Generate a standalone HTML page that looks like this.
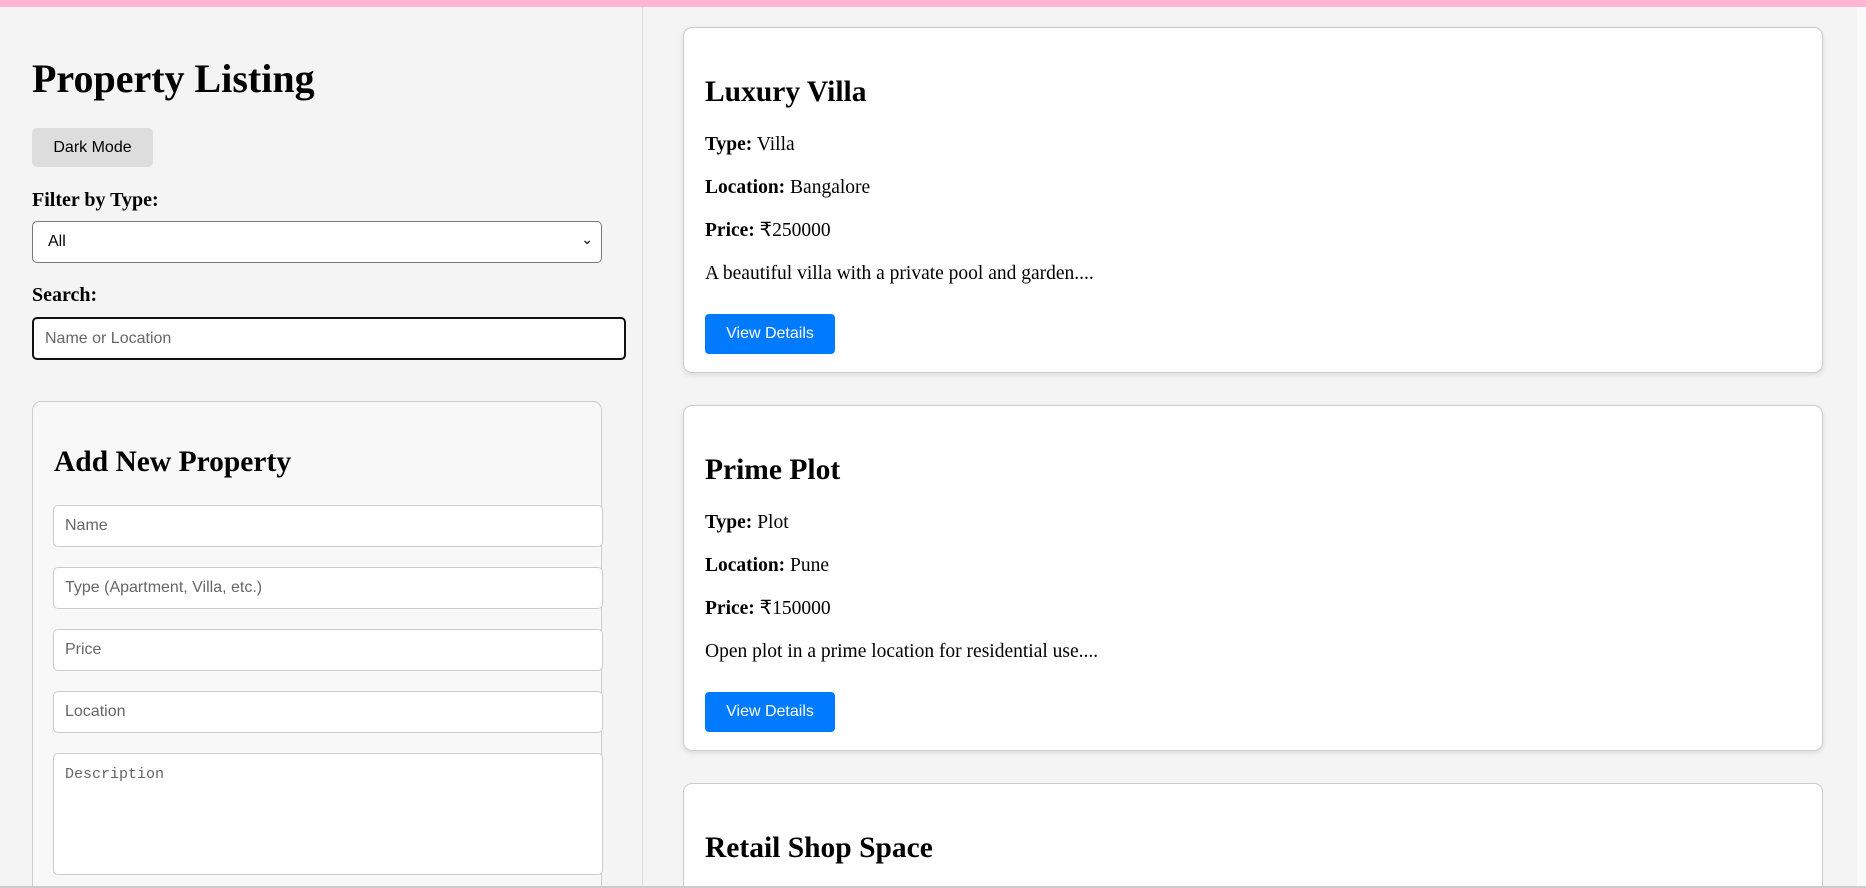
<!DOCTYPE html>
<html style="height:888px;overflow:hidden"><head><meta charset="utf-8"><style>
*{box-sizing:border-box;margin:0;padding:0}
html,body{height:888px;overflow:hidden}
body{width:1866px;background:#f4f4f4;font-family:"Liberation Serif",serif;font-size:20px;color:#000;position:relative}
#w{position:absolute;left:0;top:0;width:1866px;height:888px;overflow:hidden}
.bar{position:absolute;left:0;top:0;width:1866px;height:7px;background:#ffb6d1}
.side{position:absolute;left:0;top:7px;width:643px;height:881px;background:#f4f4f4;border-right:1px solid #ddd}
.a{position:absolute}
h1{font-size:40px;font-weight:bold;line-height:1}
.btn{background:#ddd;border-radius:5px;font:16px "Liberation Sans",sans-serif;display:flex;align-items:center;justify-content:center}
.lbl{font-weight:bold;font-size:20px}
.inp{background:#fff;border:1px solid #ccc;border-radius:5px;font:16px "Liberation Sans",sans-serif;color:#666;padding-left:11px;display:flex;align-items:center}
.box{background:#f8f8f8;border:1px solid #ccc;border-bottom:none;border-radius:9px 9px 0 0}
h2{font-size:29.5px;font-weight:bold;line-height:1}
.card{position:absolute;left:683px;width:1140px;height:346px;background:#fff;border:1px solid #ccc;border-radius:9px;box-shadow:0 2px 6px rgba(0,0,0,.1)}
.card h2{position:absolute;left:21px;top:50px}
.card p{position:absolute;left:21px;font-size:19.5px;line-height:1}
.vb{position:absolute;left:21px;top:286px;width:130px;height:40px;background:#007bff;color:#fff;border-radius:4px;font:16px "Liberation Sans",sans-serif;display:flex;align-items:center;justify-content:center}
.sb{position:absolute;left:1857px;top:7px;width:9px;height:881px;background:#fafafa}
.bot{position:absolute;left:0;top:886px;width:1866px;height:2px;background:#ccc}
</style></head><body><div id="w">
<div class="bar"></div>
<div class="side"></div>
<h1 class="a" style="left:32px;top:59px">Property Listing</h1>
<div class="a btn" style="left:32px;top:128px;width:121px;height:39px">Dark Mode</div>
<div class="a lbl" style="left:32px;top:189px">Filter by Type:</div>
<div class="a inp" style="left:32px;top:221px;width:570px;height:42px;border-color:#777;color:#000;padding-left:15px">All<span style="position:absolute;right:8px;top:9px;font-size:14px">&#8964;</span></div>
<div class="a lbl" style="left:32px;top:284px">Search:</div>
<div class="a inp" style="left:32px;top:317px;width:594px;height:43px;border:2px solid #111;color:#666">Name or Location</div>
<div class="a box" style="left:32px;top:401px;width:570px;height:487px"></div>
<h2 class="a" style="left:54px;top:448px">Add New Property</h2>
<div class="a inp" style="left:53px;top:505px;width:550px;height:42px">Name</div>
<div class="a inp" style="left:53px;top:567px;width:550px;height:42px">Type (Apartment, Villa, etc.)</div>
<div class="a inp" style="left:53px;top:629px;width:550px;height:42px">Price</div>
<div class="a inp" style="left:53px;top:691px;width:550px;height:42px">Location</div>
<div class="a inp" style="left:53px;top:753px;width:550px;height:122px;align-items:flex-start;padding-top:12px;font-family:'Liberation Mono',monospace;font-size:15px">Description</div>

<div class="card" style="top:27px">
<h2>Luxury Villa</h2>
<p style="top:107px"><b>Type:</b> Villa</p>
<p style="top:150px"><b>Location:</b> Bangalore</p>
<p style="top:193px"><b>Price:</b> ₹250000</p>
<p style="top:236px">A beautiful villa with a private pool and garden....</p>
<div class="vb">View Details</div>
</div>
<div class="card" style="top:405px">
<h2>Prime Plot</h2>
<p style="top:107px"><b>Type:</b> Plot</p>
<p style="top:150px"><b>Location:</b> Pune</p>
<p style="top:193px"><b>Price:</b> ₹150000</p>
<p style="top:236px">Open plot in a prime location for residential use....</p>
<div class="vb">View Details</div>
</div>
<div class="card" style="top:783px;height:105px;border-bottom:none;border-radius:9px 9px 0 0;box-shadow:none">
<h2>Retail Shop Space</h2>
</div>
<div class="sb"></div>
<div class="bot"></div>
</div></body></html>
